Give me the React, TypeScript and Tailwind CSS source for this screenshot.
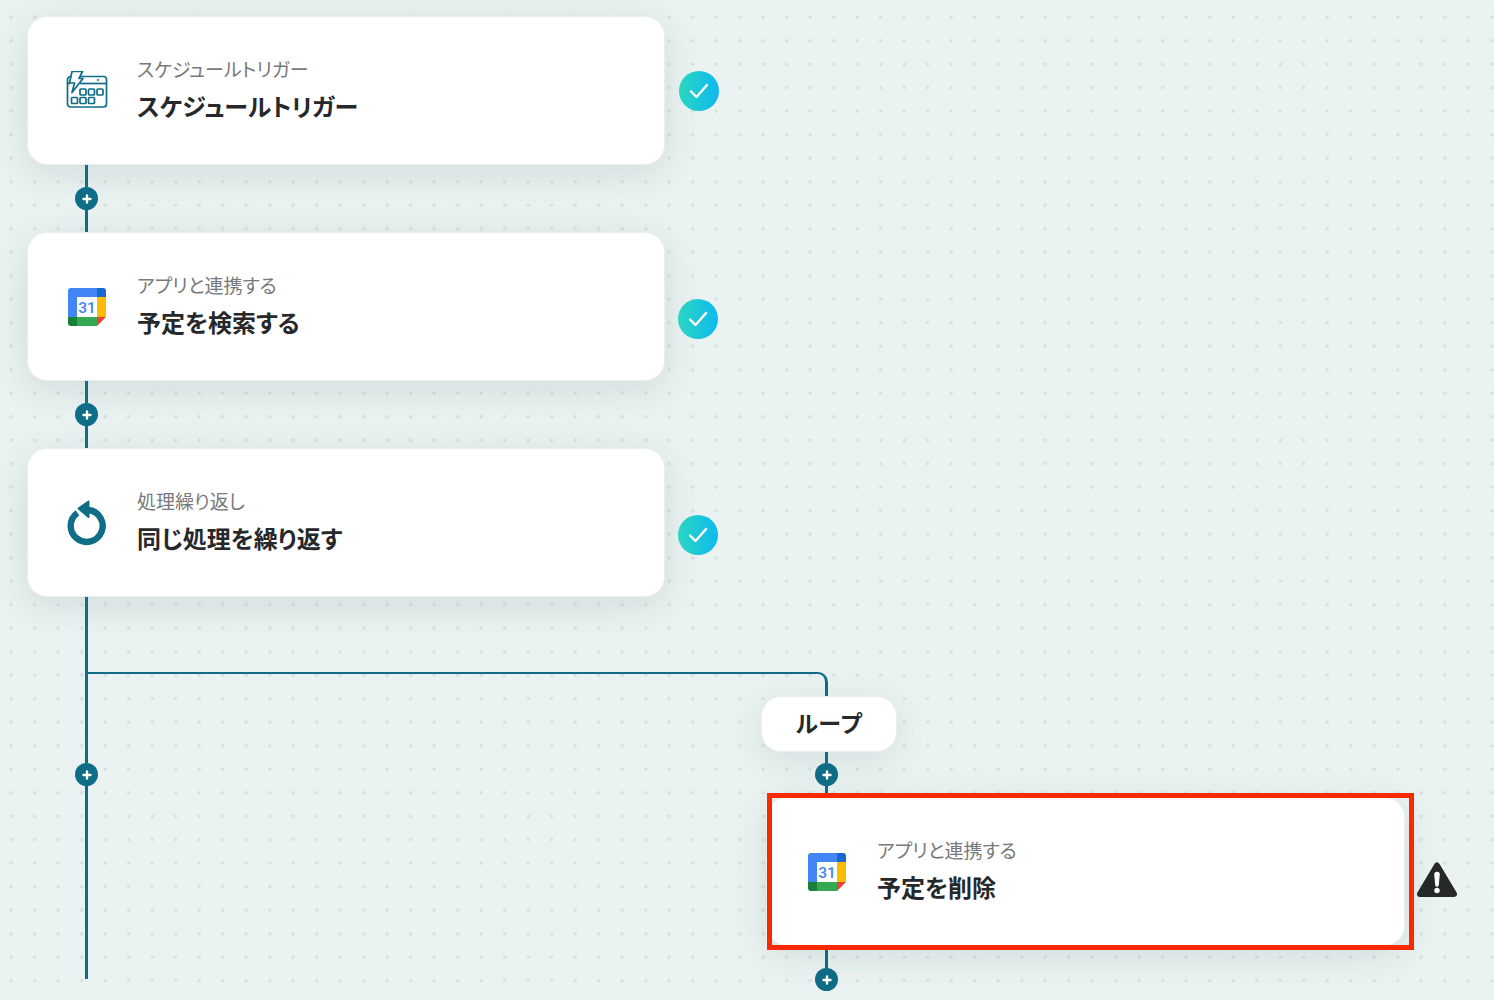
const jpFont = "font-['Hiragino_Sans','Noto_Sans_CJK_JP','Noto_Sans_JP',sans-serif]"

function ScheduleIcon() {
  return (
    <svg width="44" height="40" viewBox="0 1 44 40" fill="none" stroke="#0f6d87" strokeWidth="1.7" strokeLinejoin="round">
      <path d="M14 6.5H38.5a3 3 0 0 1 3 3V34a3 3 0 0 1-3 3H5.5a3 3 0 0 1-3-3V9.5a3 3 0 0 1 3-3H6" />
      <path d="M15 13.5H41.5" />
      <path d="M2.5 13.5H5" />
      <path d="M7 1.5H17.5L14 8.5H18L7 22.5L9.5 13H4.5Z" fill="#fff" />
      <circle cx="33" cy="10" r="1" fill="#0f6d87" stroke="none" />
      <rect x="15" y="19" width="6" height="6" rx="1" />
      <rect x="23.5" y="19" width="6" height="6" rx="1" />
      <rect x="32" y="19" width="6" height="6" rx="1" />
      <rect x="6.5" y="27.5" width="6" height="6" rx="1" />
      <rect x="15" y="27.5" width="6" height="6" rx="1" />
      <rect x="23.5" y="27.5" width="6" height="6" rx="1" />
    </svg>
  )
}

function CalendarIcon() {
  return (
    <svg width="38" height="38" viewBox="0 0 38 38">
      <path d="M3 0H29V9H9V29H0V3a3 3 0 0 1 3-3Z" fill="#4285f4" />
      <path d="M29 0H35a3 3 0 0 1 3 3V9H29Z" fill="#1967d2" />
      <rect x="29" y="9" width="9" height="20" fill="#fbbc04" />
      <path d="M29 29H38L29 38Z" fill="#ea4335" />
      <rect x="9" y="29" width="20" height="9" fill="#34a853" />
      <path d="M0 29H9V38H3a3 3 0 0 1-3-3Z" fill="#188038" />
      <rect x="9" y="9" width="20" height="20" fill="#fff" />
      <text x="19" y="25" textAnchor="middle" fontSize="15.5" fontWeight="500" fontFamily="Roboto, sans-serif" fill="#4285f4">31</text>
    </svg>
  )
}

function LoopIcon() {
  return (
    <svg width="40" height="48" viewBox="-1.5 0 40 48" fill="none">
      <path d="M9 13.8A16 16 0 1 0 20 11" stroke="#0f6d87" strokeWidth="6.4" />
      <path d="M20 2.5L10 9.5L20 18Z" fill="#0f6d87" stroke="#0f6d87" strokeWidth="2" strokeLinejoin="round" />
    </svg>
  )
}

function FlowCard({ icon, sub, title }: { icon: React.ReactNode; sub: string; title: string }) {
  return (
    <div className="flex h-[149px] w-[638px] shrink-0 items-center rounded-[20px] border border-[#eaefef] bg-white shadow-[0_8px_36px_rgba(60,90,90,0.15)]">
      <div className="flex w-[109px] shrink-0 justify-center pl-[9px]">{icon}</div>
      <div className="flex flex-col pb-[5px]">
        <span className="text-[19px] leading-[26px] text-[#77797a] [font-feature-settings:'palt']">{sub}</span>
        <span className="mt-[9px] text-[24px] leading-[30px] font-semibold text-[#26282a] [font-feature-settings:'palt']">{title}</span>
      </div>
    </div>
  )
}

function Connector({ above, below }: { above: string; below: string }) {
  return (
    <div className="flex w-[119px] flex-col items-center">
      <div className={`w-[3px] bg-[#0f6d87] ${above}`} />
      <div className="flex h-[23px] w-[23px] items-center justify-center rounded-full bg-[#0f6d87]">
        <svg width="10" height="10" viewBox="0 0 10 10" stroke="#fff" strokeWidth="2.4" strokeLinecap="round">
          <path d="M5 1.5V8.5M1.5 5H8.5" />
        </svg>
      </div>
      <div className={`w-[3px] bg-[#0f6d87] ${below}`} />
    </div>
  )
}

function CheckBadge({ className }: { className: string }) {
  return (
    <div className={`flex h-[40px] w-[40px] shrink-0 items-center justify-center rounded-full bg-gradient-to-r from-[#2bd6bf] to-[#12b8ee] ${className}`}>
      <svg width="20" height="16" viewBox="0 0 20 16" fill="none" stroke="#fff" strokeWidth="2.4" strokeLinecap="round" strokeLinejoin="round">
        <path d="M2 8.5L7.5 14L18 2" />
      </svg>
    </div>
  )
}

export default function App() {
  return (
    <div className={`relative h-[1000px] w-[1494px] overflow-hidden bg-[#eaf3f2] bg-[radial-gradient(circle,#d9e2e1_1.5px,transparent_2px)] bg-[size:23.5px_23.5px] bg-[position:-0.55px_5.45px] pl-[27px] pt-[16px] ${jpFont}`}>
      {/* branch from the main line to the loop */}
      <div className="absolute left-[87px] top-[672px] h-[24px] w-[741px] rounded-tr-[10px] border-t-2 border-r-[3px] border-[#0f6d87]" />

      <div className="flex flex-col">
        <div className="flex items-center gap-[14px]">
          <FlowCard icon={<ScheduleIcon />} sub="スケジュールトリガー" title="スケジュールトリガー" />
          <CheckBadge className="" />
        </div>
        <Connector above="h-[22px]" below="h-[22px]" />
        <div className="flex items-center gap-[13px]">
          <FlowCard icon={<CalendarIcon />} sub="アプリと連携する" title="予定を検索する" />
          <CheckBadge className="mt-[24px]" />
        </div>
        <Connector above="h-[22px]" below="h-[22px]" />
        <div className="flex items-center gap-[13px]">
          <FlowCard icon={<LoopIcon />} sub="処理繰り返し" title="同じ処理を繰り返す" />
          <CheckBadge className="mt-[24px]" />
        </div>
        <Connector above="h-[166px]" below="h-[193px]" />
      </div>

      {/* loop branch */}
      <div className="absolute left-[767px] top-[696px] flex flex-col">
        <div className="-ml-[6px] flex h-[56px] w-[136px] items-center justify-center rounded-[20px] border border-[#eaefef] bg-white pb-[3px] text-[23px] font-semibold text-[#26282a] shadow-[0_8px_36px_rgba(60,90,90,0.13)]">
          ループ
        </div>
        <Connector above="h-[11px]" below="h-[7px]" />
        <div className="flex items-start gap-[2px]">
          <div className="relative h-[157px] w-[647px] pt-[4px]">
            <FlowCard icon={<CalendarIcon />} sub="アプリと連携する" title="予定を削除" />
            {/* red highlight frame */}
            <div className="absolute inset-0 border-[5px] border-[#fa2a00]" />
          </div>
          <svg className="mt-[67px]" width="42" height="39" viewBox="0 0 42 39">
            <path d="M21 5.5L38 34H4Z" fill="#26282a" stroke="#26282a" strokeWidth="6" strokeLinejoin="round" />
            <path d="M18.2 14.5a2.8 2.8 0 0 1 5.6 0L22.8 25a1.8 1.8 0 0 1-3.6 0Z" fill="#fff" />
            <circle cx="21" cy="30.5" r="2.7" fill="#fff" />
          </svg>
        </div>
        <Connector above="h-[18px]" below="h-0" />
      </div>
    </div>
  )
}
